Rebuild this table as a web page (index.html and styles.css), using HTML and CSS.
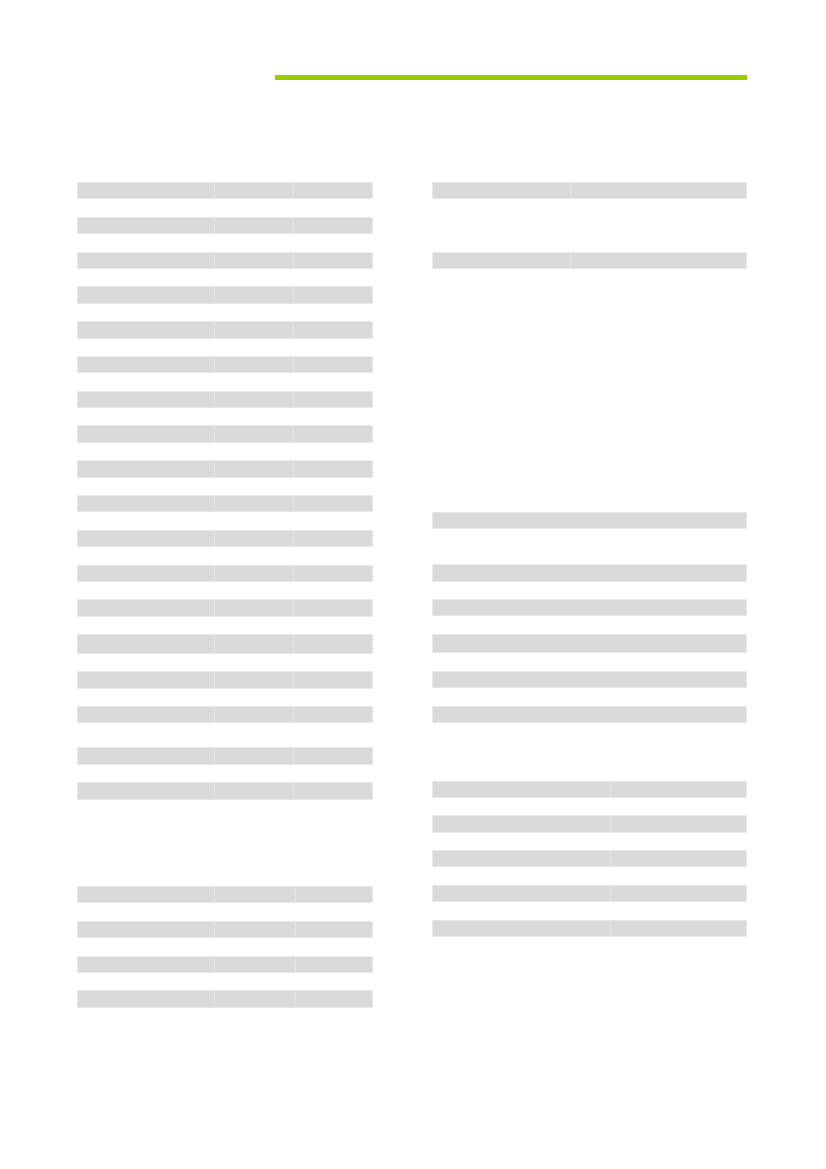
FILE: index.html
```html
<!DOCTYPE html>
<html lang="en">
<head>
<meta charset="utf-8">
<title>Document</title>
<link rel="stylesheet" href="styles.css">
</head>
<body>
<div class="page">
  <header class="header"><div class="rule"></div></header>
  <main class="columns">
    <section class="col col-left">
      <div class="row r3"><div class="c"></div><div class="c"></div><div class="c"></div></div>
      <div class="row r3"><div class="c"></div><div class="c"></div><div class="c"></div></div>
      <div class="row r3"><div class="c"></div><div class="c"></div><div class="c"></div></div>
      <div class="row r3"><div class="c"></div><div class="c"></div><div class="c"></div></div>
      <div class="row r3"><div class="c"></div><div class="c"></div><div class="c"></div></div>
      <div class="row r3"><div class="c"></div><div class="c"></div><div class="c"></div></div>
      <div class="row r3"><div class="c"></div><div class="c"></div><div class="c"></div></div>
      <div class="row r3"><div class="c"></div><div class="c"></div><div class="c"></div></div>
      <div class="row r3"><div class="c"></div><div class="c"></div><div class="c"></div></div>
      <div class="row r3"><div class="c"></div><div class="c"></div><div class="c"></div></div>
      <div class="row r3"><div class="c"></div><div class="c"></div><div class="c"></div></div>
      <div class="row r3"><div class="c"></div><div class="c"></div><div class="c"></div></div>
      <div class="row r3"><div class="c"></div><div class="c"></div><div class="c"></div></div>
      <div class="row r3 tall"><div class="c"></div><div class="c"></div><div class="c"></div></div>
      <div class="row r3"><div class="c"></div><div class="c"></div><div class="c"></div></div>
      <div class="row r3"><div class="c"></div><div class="c"></div><div class="c"></div></div>
      <div class="row r3 gap-l1"><div class="c"></div><div class="c"></div><div class="c"></div></div>
      <div class="row r3"><div class="c"></div><div class="c"></div><div class="c"></div></div>
      <div class="row r3b gap-l2"><div class="c"></div><div class="c"></div><div class="c"></div></div>
      <div class="row r3b"><div class="c"></div><div class="c"></div><div class="c"></div></div>
      <div class="row r3b"><div class="c"></div><div class="c"></div><div class="c"></div></div>
      <div class="row r3b"><div class="c"></div><div class="c"></div><div class="c"></div></div>
    </section>
    <section class="col col-right">
      <div class="row r2a"><div class="c"></div><div class="c"></div></div>
      <div class="row r2a gap-r1"><div class="c"></div><div class="c"></div></div>
      <div class="row r1 gap-r2"><div class="c"></div></div>
      <div class="row r1 gap-r3"><div class="c"></div></div>
      <div class="row r1"><div class="c"></div></div>
      <div class="row r1 tall"><div class="c"></div></div>
      <div class="row r1"><div class="c"></div></div>
      <div class="row r1"><div class="c"></div></div>
      <div class="row r2b gap-r4"><div class="c"></div><div class="c"></div></div>
      <div class="row r2b"><div class="c"></div><div class="c"></div></div>
      <div class="row r2b"><div class="c"></div><div class="c"></div></div>
      <div class="row r2b"><div class="c"></div><div class="c"></div></div>
      <div class="row r2b"><div class="c"></div><div class="c"></div></div>
    </section>
  </main>
</div>
</body>
</html>
```
FILE: styles.css
```css
html, body {
  margin: 0;
  padding: 0;
  background: #ffffff;
  font-family: "Liberation Sans", Arial, sans-serif;
}

.page {
  width: 826px;
  min-height: 1169px;
  box-sizing: border-box;
  padding-top: 75px;
}

.header {
  padding-left: 275px;
}

.rule {
  width: 472px;
  height: 5px;
  background: #99cc00;
}

.columns {
  display: flex;
  align-items: flex-start;
  padding-left: 77px;
  gap: 58.5px;
  margin-top: 102px;
}

.col {
  display: flex;
  flex-direction: column;
  gap: 17.4px;
}

.col-left { width: 296px; }
.col-right { width: 315.5px; }

.row {
  display: flex;
  height: 17.4px;
  box-sizing: border-box;
  border: 1px solid #e9e9e9;
  background: #d9d9d9;
}

.row.tall { height: 19.7px; }

.c {
  height: 100%;
  background: #d9d9d9;
}
.c + .c { border-left: 1px solid #e6e6e6; }

.r3 .c:nth-child(1) { width: 136px; }
.r3 .c:nth-child(2) { width: 78px; }
.r3 .c:nth-child(3) { flex: 1; }

.r3b .c:nth-child(1) { width: 136px; }
.r3b .c:nth-child(2) { width: 80px; }
.r3b .c:nth-child(3) { flex: 1; }

.r2a .c:nth-child(1) { width: 137px; }
.r2a .c:nth-child(2) { flex: 1; }

.r2b .c:nth-child(1) { width: 177.5px; }
.r2b .c:nth-child(2) { flex: 1; }

.r1 .c { flex: 1; }

.gap-l1 { margin-top: 6.6px; }
.gap-l2 { margin-top: 69px; }

.gap-r1 { margin-top: 35.2px; }
.gap-r2 { margin-top: 225.2px; }
.gap-r3 { margin-top: 17.4px; }
.gap-r4 { margin-top: 40.2px; }
```
